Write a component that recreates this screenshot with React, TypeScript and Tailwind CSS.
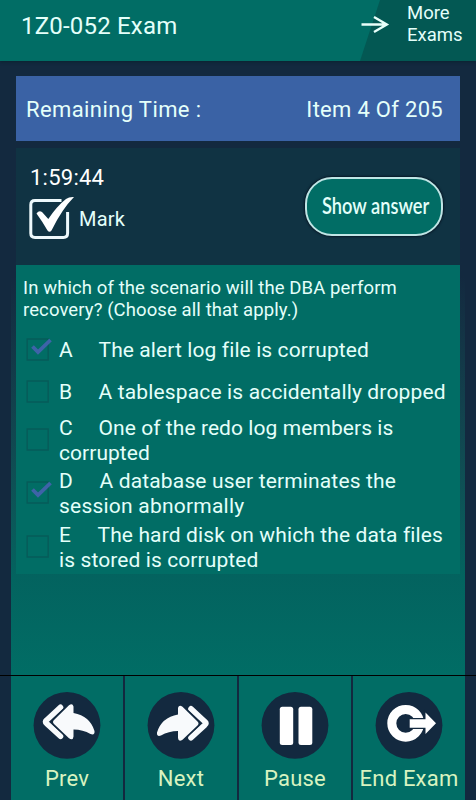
import React from "react";

const options = [
  { id: "A", on: true, row: "h-[42px]", gap: "w-[39.5px]", lines: [["The alert log file is corrupted", "tracking-[0.1px]"]] },
  { id: "B", on: false, row: "h-[42px]", gap: "w-[39.5px]", lines: [["A tablespace is accidentally dropped", "tracking-[0.15px]"]] },
  { id: "C", on: false, row: "h-[53.5px]", gap: "w-[39.5px]", lines: [["One of the redo log members is", "tracking-[0.07px]"], ["corrupted", "tracking-[0.05px]"]] },
  { id: "D", on: true, row: "h-[53.5px]", gap: "w-[40.5px]", lines: [["A database user terminates the", "tracking-[0.15px]"], ["session abnormally", "tracking-[0.22px]"]] },
  { id: "E", on: false, row: "h-[53.5px]", gap: "w-[38.5px]", lines: [["The hard disk on which the data files", "tracking-[0.12px]"], ["is stored is corrupted", "tracking-[0.1px]"]] },
];

function Box({ on }: { on: boolean }) {
  return (
    <svg className="block h-[28px] w-[28px] shrink-0" viewBox="0 0 28 28" fill="none">
      <rect x="3.2" y="3" width="21" height="21" stroke="#075b59" strokeWidth="1.4" />
      {on && <path d="M8.5 10.500l5.500 5.500L26.500 4" stroke="#3e63a8" strokeWidth="3.800" />}
    </svg>
  );
}

function Disc({ children }: { children: React.ReactNode }) {
  return (
    <svg className="block h-[68px] w-[68px]" viewBox="0 0 68 68">
      <circle cx="34" cy="34.3" r="33.4" fill="#13293f" />
      {children}
    </svg>
  );
}

const reply = (
  <g>
    <path d="M27.500 16.300L13.500 29.200q-2 1.600 0 3.200L27.500 45.300" fill="none" stroke="#f8fafc" strokeWidth="5.600" strokeLinecap="round" strokeLinejoin="round" />
    <path
      d="M21 29L36 14.200Q39.500 11.600 40.500 15.500V22Q57 25 61.500 40Q62 44.500 57.500 43Q50 38.500 40.500 38.500V45.500Q40 50 36 47.300L21 33Q19 31 21 29z"
      fill="#f8fafc"
      stroke="#13293f"
      strokeWidth="3"
      paintOrder="stroke"
    />
  </g>
);

export default function App() {
  return (
    <div className="flex h-[800px] w-[476px] flex-col overflow-hidden bg-[#13293f] font-['Roboto',sans-serif] text-[#e4fffa]">
      <header className="relative flex h-[61px] shrink-0 bg-[#016d65] shadow-[0_1px_3px_#0b2230]">
        <svg className="absolute inset-0 h-[61px] w-[476px]" viewBox="0 0 476 61" fill="none">
          <path d="M380 0h96v61H360z" fill="#035853" />
          <path d="M361.500 24.500h25M374 17l12.800 7.500-12.800 7.500" stroke="#e8fffa" strokeWidth="2.400" />
        </svg>
        <h1 className="relative ml-[21px] mt-[11px] w-[386px] whitespace-nowrap text-[24px] leading-[30px] tracking-[0.2px]">1Z0-052 Exam</h1>
        <div className="relative mt-[2px] text-[18.5px] leading-[22px]">More<br />Exams</div>
      </header>

      <div className="mx-[11px] flex h-[614px] w-[454px] shrink-0 flex-col bg-linear-to-b from-[#13293f] from-35% via-[#03635f] via-84% to-[#016d65] px-[5px] pt-[15px]">
        <div className="flex h-[65px] shrink-0 items-center justify-between bg-[#3a62a5] pl-[10px] pr-[17px] pt-[2px] text-[22px]">
          <span className="whitespace-nowrap tracking-[0.4px]">Remaining Time :</span>
          <span className="whitespace-nowrap tracking-[0.3px]">Item 4 Of 205</span>
        </div>
        <section className="mt-[7px] flex h-[117px] shrink-0 bg-[#103343]">
          <div className="w-[289px] pl-[14px] pt-[16px]">
            <div className="text-[22px] leading-[27px] tracking-[0.25px] text-white">1:59:44</div>
            <div className="flex h-[54px] items-center">
              <svg className="h-[54px] w-[49px] overflow-visible" viewBox="0 0 49 54" fill="none">
                <path d="M31.500 9.500H5q-4.200 0-4.200 4.200v28.600q0 4.200 4.200 4.200h28.400q4.200 0 4.200-4.200V21" stroke="#eef9fc" strokeWidth="3" />
                <path d="M6.500 22.500q2.500-3.500 5.500-1.500l6.300 7Q27 15 36 8q3-2.300 8-2-12 12-22.500 33.500-2 2.500-4 0Q12 30 6.500 22.500z" fill="#fff" />
              </svg>
              <span className="pt-px text-[20px] tracking-[0.25px]">Mark</span>
            </div>
          </div>
          <button className="mt-[29px] flex h-[59px] w-[138px] items-center justify-center rounded-[27px] border-2 border-[#bfe5e5] bg-[#016d65] pb-[3px] pl-[3px] font-['Lato',sans-serif] text-[22px] font-semibold shadow-[0_0_2px_1px_#081827]">
            <span className="scale-x-[0.83] whitespace-nowrap">Show answer</span>
          </button>
        </section>
        <main className="h-[309px] w-[443.5px] shrink-0 bg-[#016d65] pt-[12px]">
          <p className="ml-[7px] whitespace-nowrap text-[18.5px] leading-[22px] tracking-[0.1px]">In which of the scenario will the DBA perform<br />recovery? (Choose all that apply.)</p>
          <div className="mt-[8px]">
            {options.map((o) => (
              <div key={o.id} className={`flex items-center ${o.row}`}>
                <div className="flex w-[43px] shrink-0 pl-[8px]"><Box on={o.on} /></div>
                <div className={`whitespace-nowrap text-[21px] leading-[25px] ${o.lines[1] ? "pt-[2px]" : "pt-px"}`}>
                  <div className="flex"><span className={`shrink-0 ${o.gap}`}>{o.id}</span><span className={o.lines[0][1]}>{o.lines[0][0]}</span></div>
                  {o.lines[1] && <div><span className={o.lines[1][1]}>{o.lines[1][0]}</span></div>}
                </div>
              </div>
            ))}
          </div>
        </main>
      </div>

      <nav className="flex h-[125px] shrink-0 border-t border-black text-[22px] tracking-[0.2px] text-[#d8f3c0]">
        <div className="grid w-full grid-cols-[114px_114px_114px_112px] px-[11px]">
          {["Prev", "Next", "Pause", "End Exam"].map((label, i) => (
            <div key={label} className={`flex flex-col items-center bg-[#016d65] pt-[15px] ${i < 3 ? "border-r-2 border-[#13293f]" : ""}`}>
              <Disc>
                {i === 0 && reply}
                {i === 1 && <g transform="translate(71.5 1.5) scale(-1 1)">{reply}</g>}
                {i === 2 && <g fill="#fff"><rect x="18.8" y="15.7" width="13.4" height="38.3" rx="2.5" /><rect x="37.5" y="15.7" width="13.8" height="38.3" rx="2.5" /></g>}
                {i === 3 && (
                  <g>
                    <circle cx="30.700" cy="32.300" r="13.900" fill="none" stroke="#fff" strokeWidth="9" />
                    <path d="M34.700 28.300H50.500V21.500L61 32.300 50.500 43V36.800H34.700z" fill="#fff" stroke="#13293f" strokeWidth="2.600" paintOrder="stroke" />
                  </g>
                )}
              </Disc>
              <span className="mt-[5px] whitespace-nowrap leading-[30px]">{label}</span>
            </div>
          ))}
        </div>
      </nav>
    </div>
  );
}
